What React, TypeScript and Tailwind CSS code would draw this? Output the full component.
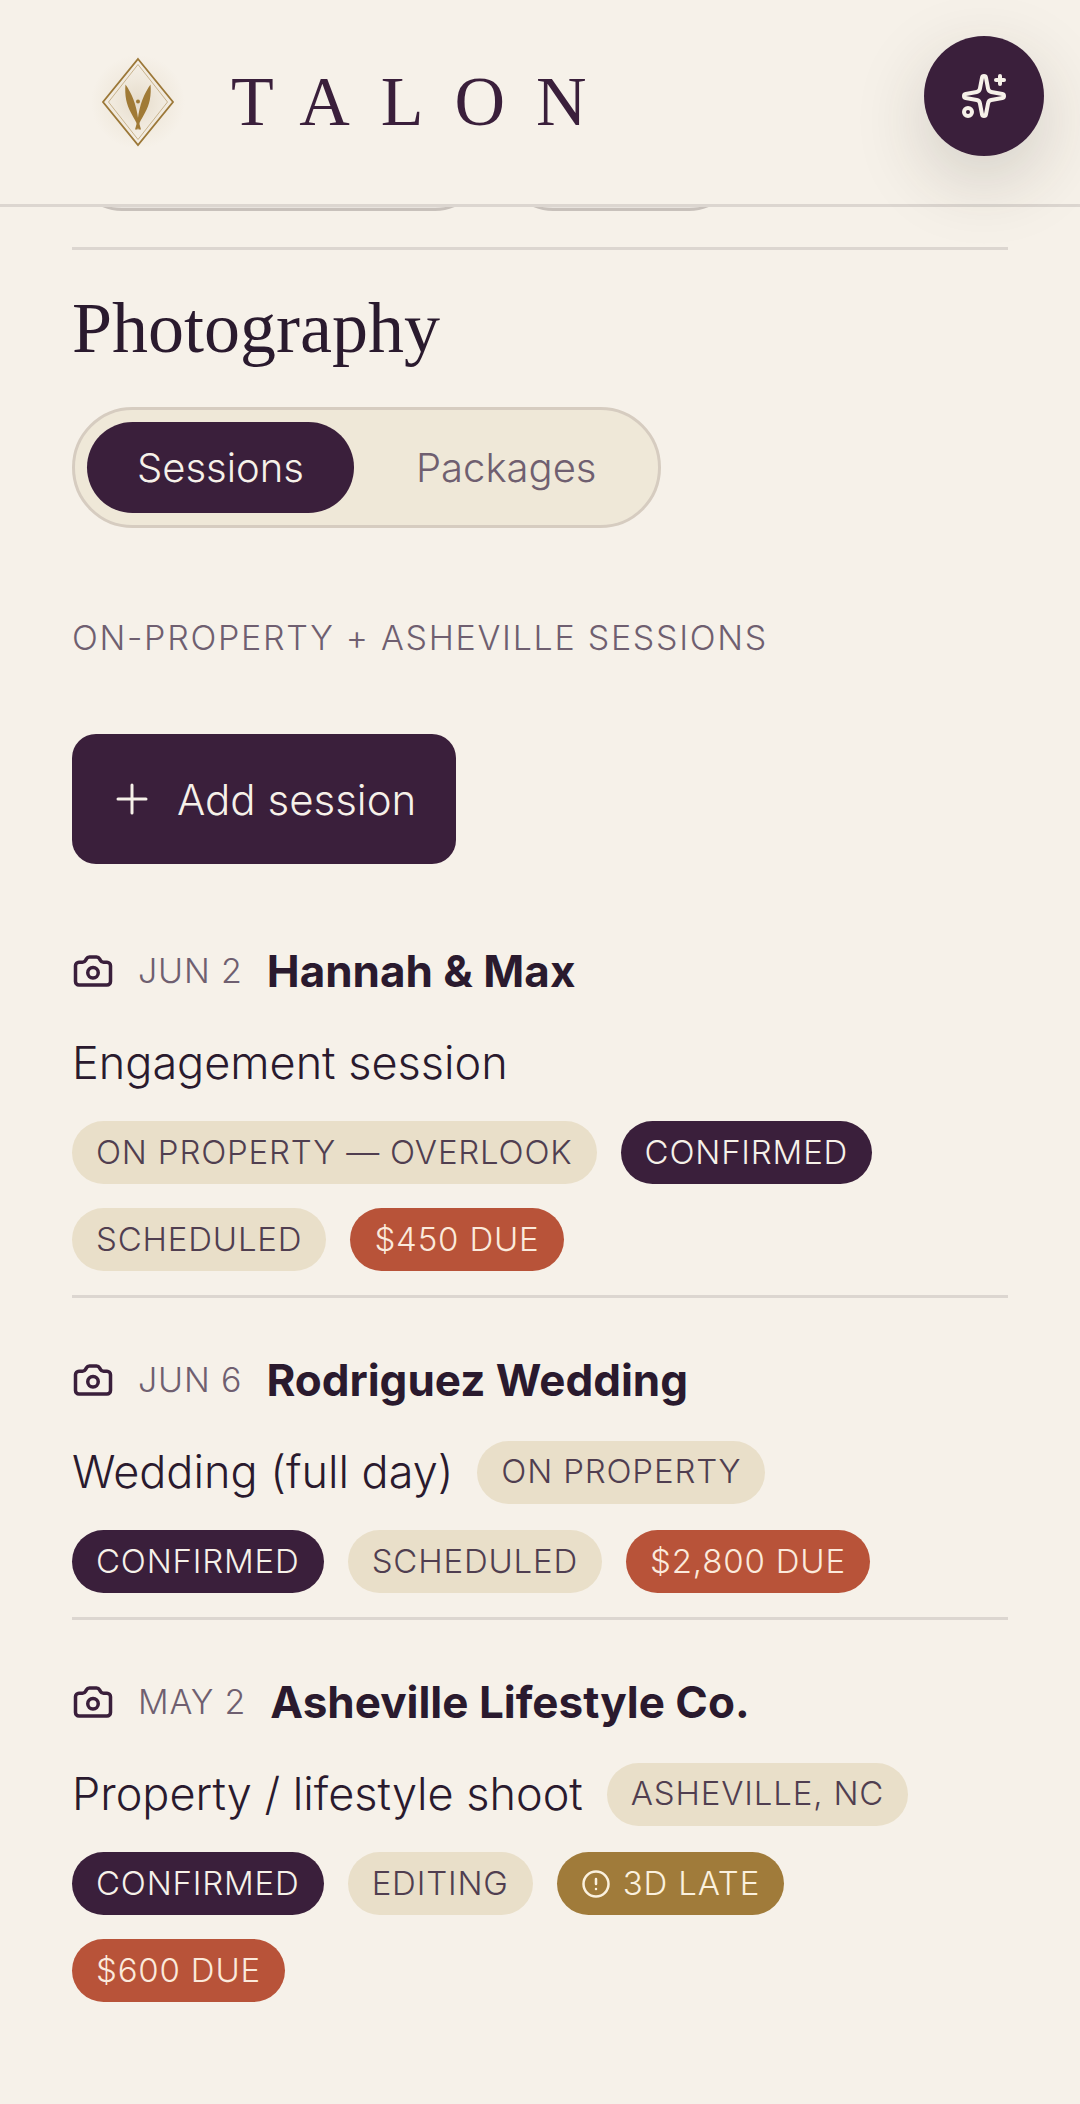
import { useState } from "react";
import { Camera, CircleAlert, Plus, Sparkles } from "lucide-react";

type Tone = "sand" | "plum" | "rust" | "gold";

interface Tag {
  label: string;
  tone: Tone;
  alert?: boolean;
}

interface Session {
  date: string;
  client: string;
  kind: string;
  tags: Tag[];
}

const sessions: Session[] = [
  {
    date: "JUN 2",
    client: "Hannah & Max",
    kind: "Engagement session",
    tags: [
      { label: "ON PROPERTY — OVERLOOK", tone: "sand" },
      { label: "CONFIRMED", tone: "plum" },
      { label: "SCHEDULED", tone: "sand" },
      { label: "$450 DUE", tone: "rust" },
    ],
  },
  {
    date: "JUN 6",
    client: "Rodriguez Wedding",
    kind: "Wedding (full day)",
    tags: [
      { label: "ON PROPERTY", tone: "sand" },
      { label: "CONFIRMED", tone: "plum" },
      { label: "SCHEDULED", tone: "sand" },
      { label: "$2,800 DUE", tone: "rust" },
    ],
  },
  {
    date: "MAY 2",
    client: "Asheville Lifestyle Co.",
    kind: "Property / lifestyle shoot",
    tags: [
      { label: "ASHEVILLE, NC", tone: "sand" },
      { label: "CONFIRMED", tone: "plum" },
      { label: "EDITING", tone: "sand" },
      { label: "3D LATE", tone: "gold", alert: true },
      { label: "$600 DUE", tone: "rust" },
    ],
  },
];

const toneClass: Record<Tone, string> = {
  sand: "bg-[#e9dfc9] text-[#503e50]",
  plum: "bg-[#3a1f3b] text-[#f6f1e9]",
  rust: "bg-[#b85339] text-[#fbeadc]",
  gold: "bg-[#a07b3a] text-[#fbf1de]",
};

function Logo() {
  return (
    <svg viewBox="0 0 96 96" className="size-24" fill="none" role="img" aria-label="Talon emblem">
      <defs>
        <radialGradient id="glow">
          <stop offset="0" stopColor="#e6dccb" />
          <stop offset="0.5" stopColor="#f0e9dd" />
          <stop offset="1" stopColor="#f6f1e9" />
        </radialGradient>
      </defs>
      <circle cx="48" cy="48" r="47" fill="url(#glow)" />
      <path d="M48 5 83 48 48 91 13 48Z" stroke="#9c7838" strokeWidth="1.8" />
      <path d="M48 10.5 77.500 48 48 85.500 18.500 48Z" stroke="#c9b48e" strokeWidth="1" />
      <path
        d="M35.500 30.500C41.500 39 46.500 50 48.300 66L51 75.500H48.500L46.500 69C43 62 38 55 36.200 46C35.200 41 35 35 35.500 30.500Z"
        fill="#a07a36"
      />
      <path
        d="M60.500 30.500C54.500 39 49.500 50 47.700 66L45 75.500H47.500L49.500 69C53 62 58 55 59.800 46C60.800 41 61 35 60.500 30.500Z"
        fill="#a07a36"
      />
      <circle cx="48" cy="47.500" r="2" fill="#a07a36" />
    </svg>
  );
}

function Header() {
  return (
    <header className="sticky top-0 z-10 flex h-[207px] items-center gap-[45px] border-b-[3px] border-[#dcd6d0] bg-[#f6f1e9] pl-[90px]">
      <Logo />
      <span className="font-['Liberation_Serif',serif] text-[70px] leading-none tracking-[31px] text-[#3a1f3b]">
        TALON
      </span>
    </header>
  );
}

function Chip({ label, tone, alert }: Tag) {
  return (
    <span
      className={`flex h-[63px] items-center gap-3 rounded-full px-6 text-[33px] tracking-wide ${toneClass[tone]}`}
    >
      {alert && <CircleAlert size={30} strokeWidth={2} aria-hidden />}
      {label}
    </span>
  );
}

function SessionItem({ session }: { session: Session }) {
  return (
    <li className="flex flex-wrap items-center gap-6 border-b-[3px] border-[#dcd6d0] pt-12 pb-6 last:border-b-0">
      <div className="flex w-full items-center gap-6 leading-[68px]">
        <Camera size={42} className="text-[#3a1f3b]" aria-hidden />
        <span className="text-[34px] tracking-wide text-[#6f5f70]">{session.date}</span>
        <h2 className="text-[44px] font-bold">{session.client}</h2>
      </div>
      <p className="text-[45px] leading-[68px]">{session.kind}</p>
      {session.tags.map((tag) => (
        <Chip key={tag.label} {...tag} />
      ))}
    </li>
  );
}

const tabs = ["Sessions", "Packages"];

export default function App() {
  const [active, setActive] = useState("Sessions");

  return (
    <div className="min-h-screen bg-[#f6f1e9] font-['Inter',sans-serif] font-light text-[#2a1a2e]">
      <Header />
      <button
        type="button"
        aria-label="Open assistant"
        className="fixed top-9 right-9 z-20 flex size-[120px] items-center justify-center rounded-full bg-[#3a1f3b] text-[#f6f1e9] shadow-[0_24px_72px_rgba(50,45,35,0.18)]"
      >
        <Sparkles size={48} aria-hidden />
      </button>

      <main className="px-[72px] pb-20">
        {/* Filter pills scrolled beneath the header */}
        <div className="-mt-24 flex gap-[18px] border-b-[3px] border-[#dcd6d0] pb-9" aria-hidden>
          <span className="h-[100px] w-[413px] rounded-full border-[3px] border-[#c8c1bb] bg-[#e8e3dd]" />
          <span className="h-[100px] w-[236px] rounded-full border-[3px] border-[#c8c1bb] bg-[#e8e3dd]" />
        </div>

        <h1 className="mt-[42px] font-['Liberation_Serif',serif] text-[72px] leading-none font-normal">
          Photography
        </h1>

        <div
          role="tablist"
          className="mt-[43px] flex w-fit gap-3 rounded-full border-[3px] border-[#d6ccc0] bg-[#efe8d8] p-3"
        >
          {tabs.map((tab) => (
            <button
              key={tab}
              type="button"
              role="tab"
              aria-selected={tab === active}
              onClick={() => setActive(tab)}
              className={
                tab === active
                  ? "h-[91px] rounded-full bg-[#3a1f3b] px-[50px] text-[40px] text-[#f6f1e9]"
                  : "h-[91px] rounded-full px-[50px] text-[40px] text-[#6f5f70]"
              }
            >
              {tab}
            </button>
          ))}
        </div>

        <p className="mt-[86px] text-[34px] leading-[48px] tracking-wider text-[#6f5f70]">
          ON-PROPERTY + ASHEVILLE SESSIONS
        </p>

        <button
          type="button"
          className="mt-[72px] flex h-[130px] items-center gap-[21px] rounded-3xl bg-[#3a1f3b] pr-10 pl-9 text-[42px] text-[#f6f1e9]"
        >
          <Plus size={48} strokeWidth={1.500} aria-hidden />
          Add session
        </button>

        <ul className="mt-[25px]">
          {sessions.map((session) => (
            <SessionItem key={session.client} session={session} />
          ))}
        </ul>
      </main>
    </div>
  );
}
